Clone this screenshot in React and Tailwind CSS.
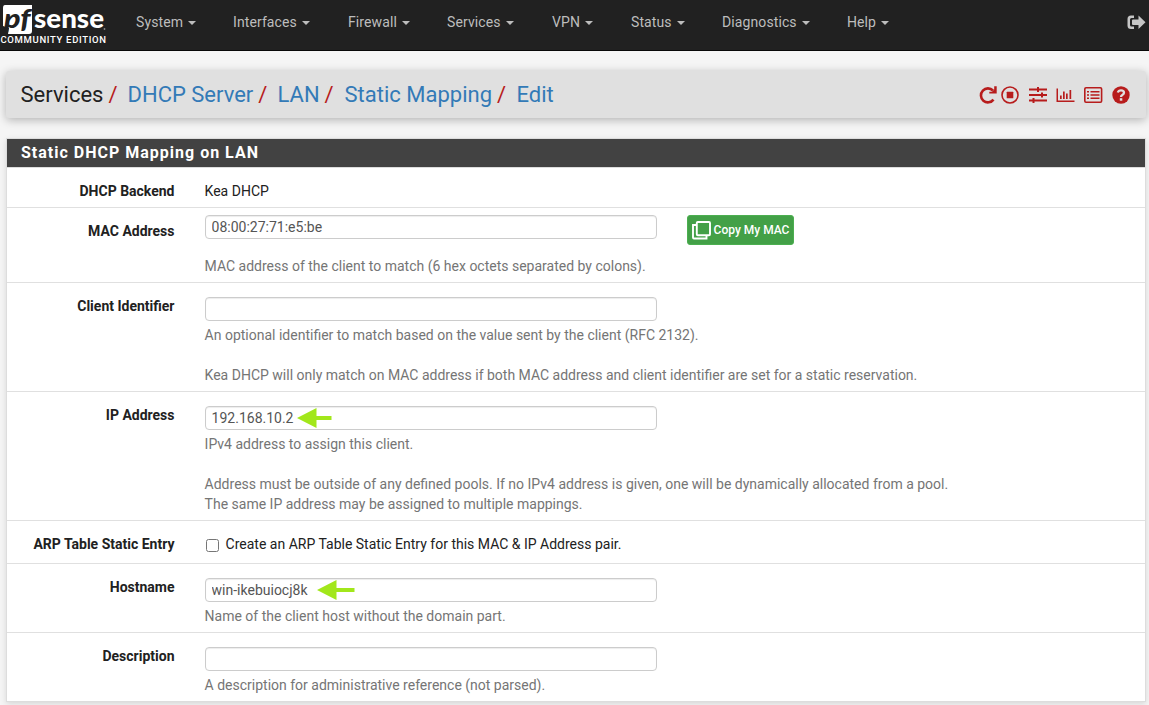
import React from "react";

const navItems = [
  { label: "System", width: "w-[97px]" },
  { label: "Interfaces", width: "w-[115px]" },
  { label: "Firewall", width: "w-[99px]" },
  { label: "Services", width: "w-[105px]" },
  { label: "VPN", width: "w-[79px]" },
  { label: "Status", width: "w-[91px]" },
  { label: "Diagnostics", width: "w-[125px]" },
  { label: "Help", width: "w-[60px]" },
];

function Logo() {
  return (
    <svg className="h-[50px] w-[108px] shrink-0" viewBox="0 0 108 50">
      <path d="M5 5H32V31Q32 34 29 34H8L9 28L3 26V8Q3 5 5 5Z" fill="#fff" />
      <text x="4" y="27.500" fontFamily="Lato, sans-serif" fontSize="27" fontWeight="900" fontStyle="italic" fill="#212121" textLength="26.500" lengthAdjust="spacingAndGlyphs">pf</text>
      <text x="34" y="28" fontFamily="Lato, sans-serif" fontSize="27" fontWeight="900" fill="#fff" textLength="70" lengthAdjust="spacingAndGlyphs">sense</text>
      <circle cx="104.500" cy="29" r="0.900" fill="#888" />
      <text x="0.500" y="43" fontFamily="Roboto, sans-serif" fontSize="9.500" fontWeight="500" fill="#fff" textLength="105.500">COMMUNITY EDITION</text>
    </svg>
  );
}

function NavBar() {
  return (
    <nav className="flex h-[51px] items-start border-b border-[#080808] bg-[#212121]">
      <Logo />
      <ul className="flex pt-3 pl-7 text-sm leading-5 tracking-[0.1px] text-[#bdbdbd]">
        {navItems.map((item) => (
          <li key={item.label} className={"flex items-center " + item.width}>
            {item.label}
            <span className="mt-[2px] ml-[5px] border-x-4 border-t-4 border-x-transparent border-t-[#bdbdbd]" />
          </li>
        ))}
      </ul>
      <svg className="mt-[15px] mr-[3px] ml-auto h-[15px] w-[19px]" viewBox="0 0 19 15" fill="#c6c6c6">
        <path d="M7 0.500V3H4.500Q3 3 3 4.500V10Q3 11.500 4.500 11.500H7V14H4Q0.500 14 0.500 10.500V4Q0.500 0.500 4 0.500Z" />
        <path d="M11.500 0.500L18.500 7.300L11.500 14V10H6Q5 10 5 9V5.500Q5 4.500 6 4.500H11.500Z" />
      </svg>
    </nav>
  );
}

function Breadcrumb() {
  return (
    <header className="mx-[6px] mr-[3px] mt-5 flex h-[47px] items-center rounded-[3px] bg-[#e0e0e0] pr-[16px] pl-[14.500px] shadow-[0_2px_10px_rgba(0,0,0,0.28)]">
      <ol className="flex text-[22px] leading-6 text-[#337ab7]">
        <li className="w-[107px] text-[#212121]">Services<span className="pl-[5px] text-[#b71c1c]">/</span></li>
        <li className="w-[150px]">DHCP Server<span className="pl-[5px] text-[#b71c1c]">/</span></li>
        <li className="w-[67px]">LAN<span className="pl-[5px] text-[#b71c1c]">/</span></li>
        <li className="w-[172px] whitespace-nowrap">Static Mapping<span className="pl-[5px] text-[#b71c1c]">/</span></li>
        <li>Edit</li>
      </ol>
      <div className="ml-auto flex items-center pt-px text-[#b71c1c]">
        <svg className="h-[18px] w-[18px]" viewBox="0 0 18 18" fill="none" stroke="currentColor" strokeWidth="2.600">
          <path d="M14.500 13.600A7 7 0 1 1 14 4.500" />
          <path d="M17.700 0.200V7.500H10.300V5.800H13L15.200 3.500V0.200Z" fill="currentColor" stroke="none" />
        </svg>
        <svg className="ml-[4px] h-[18px] w-[18px]" viewBox="0 0 18 18" fill="none" stroke="currentColor" strokeWidth="1.600">
          <circle cx="9" cy="9" r="8" />
          <rect x="5.700" y="5.700" width="6.600" height="6.600" rx="0.500" fill="currentColor" stroke="none" />
        </svg>
        <svg className="ml-[9px] h-[18px] w-[20px]" viewBox="0 0 20 18" fill="currentColor">
          <path d="M1 2.500H19V4.500H1ZM9 1H11V6H9ZM1 8H19V10H1ZM13 6.500H15V11.500H13ZM1 13.500H19V15.500H1ZM4.500 12H6.500V17H4.500Z" />
        </svg>
        <svg className="ml-[8px] h-[16px] w-[19px]" viewBox="0 0 19 16" fill="currentColor">
          <path d="M0.500 1.500H2V13.500H18.500V15H0.500ZM4 8.500H5.700V12H4ZM7 4.500H8.700V12H7ZM10 6.500H11.700V12H10ZM13.500 3H15.200V12H13.500Z" />
        </svg>
        <svg className="ml-[8px] h-[16px] w-[20px]" viewBox="0 0 20 16" fill="currentColor">
          <rect x="1.800" y="0.800" width="16.800" height="14.400" rx="1.200" fill="none" stroke="currentColor" strokeWidth="1.600" />
          <path d="M4 4H6V5.500H4ZM7.500 4H16.500V5.500H7.500ZM4 7.200H6V8.700H4ZM7.500 7.200H16.500V8.700H7.500ZM4 10.500H6V12H4ZM7.500 10.500H16.500V12H7.500Z" />
        </svg>
        <svg className="ml-[9px] h-[18px] w-[18px]" viewBox="0 0 18 18">
          <circle cx="9" cy="9" r="8.700" fill="currentColor" />
          <path d="M5.800 6.500Q6.500 4.300 9 4.300Q12 4.300 12 6.700Q12 8 10.300 8.900Q9 9.600 9 10.900" fill="none" stroke="#e0e0e0" strokeWidth="2.300" />
          <rect x="7.800" y="12.200" width="2.500" height="2.500" fill="#e0e0e0" />
        </svg>
      </div>
    </header>
  );
}

function Arrow({ left }) {
  return (
    <svg className={"absolute top-[2px] h-[20px] w-[38px] " + left} viewBox="0 0 38 20" fill="#a2e71b">
      <path d="M0 10L19.500 0V8H37.500V12H19.500V20Z" />
    </svg>
  );
}

function ShortArrow({ left }) {
  return (
    <svg className={"absolute top-[2px] h-[20px] w-[35px] " + left} viewBox="0 0 35 20" fill="#a2e71b">
      <path d="M0 10L19.500 0V8H34.500V12H19.500V20Z" />
    </svg>
  );
}

function Field({ value = "", children }) {
  return (
    <div className="relative w-[452px]">
      <input
        type="text"
        defaultValue={value}
        className="block h-6 w-full rounded-[4px] border border-[#ccc] bg-white pr-[6px] pb-px pl-[6px] text-sm text-[#555] shadow-[inset_0_1px_1px_rgba(0,0,0,0.075)] outline-none"
      />
      {children}
    </div>
  );
}

function Row({ label, height, content = "pt-[14px]", last = false, children }) {
  return (
    <div className={"flex " + height + (last ? "" : " border-b border-[#e0e0e0]")}>
      <div className="w-[167.500px] shrink-0 pt-[13px] text-right font-bold text-[#212121]">{label}</div>
      <div className={"ml-[30.100px] grow " + content}>{children}</div>
    </div>
  );
}

function Help({ children, className = "mt-[4px]" }) {
  return <p className={"text-[#757575] " + className}>{children}</p>;
}

export default function App() {
  return (
    <div className="h-[705px] overflow-hidden bg-[#f5f5f5] font-['Roboto',sans-serif] text-sm leading-5 text-[#212121]">
      <NavBar />
      <Breadcrumb />
      <main className="mt-5 mr-[3px] ml-[6px] border border-[#ddd] bg-white shadow-[0_2px_6px_rgba(0,0,0,0.12)]">
        <h2 className="h-[29px] border-b border-[#ddd] bg-[#424242] pl-[14px] text-base leading-[28px] font-bold tracking-[1px] text-white">
          Static DHCP Mapping on LAN
        </h2>
        <Row label="DHCP Backend" height="h-[40px]" content="pt-[13px]">Kea DHCP</Row>
        <Row label="MAC Address" height="h-[75px]" content="pt-[7px]">
          <div className="flex h-[41px] items-start">
            <Field value="08:00:27:71:e5:be" />
            <button className="ml-[30px] flex h-[30px] w-[107px] items-center rounded-[3px] border border-[#4caf50] bg-[#43a047] pl-1 text-xs font-medium whitespace-nowrap text-white">
              <svg className="mr-[3px] h-[20px] w-[19px] shrink-0" viewBox="0 0 19 20" fill="none" stroke="currentColor" strokeWidth="1.900">
                <rect x="4.800" y="2" width="13.200" height="13.200" rx="1" />
                <path d="M4.500 5H1V17.500Q1 18.500 2 18.500H14.500V15.500" />
              </svg>
              Copy My MAC
            </button>
          </div>
          <Help className="">MAC address of the client to match (6 hex octets separated by colons).</Help>
        </Row>
        <Row label="Client Identifier" height="h-[109px]">
          <Field />
          <Help>An optional identifier to match based on the value sent by the client (RFC 2132).<br /><br />Kea DHCP will only match on MAC address if both MAC address and client identifier are set for a static reservation.</Help>
        </Row>
        <Row label="IP Address" height="h-[129px]">
          <Field value="192.168.10.2"><ShortArrow left="left-[92.400px]" /></Field>
          <Help>IPv4 address to assign this client.<br /><br />Address must be outside of any defined pools. If no IPv4 address is given, one will be dynamically allocated from a pool.<br />The same IP address may be assigned to multiple mappings.</Help>
        </Row>
        <Row label="ARP Table Static Entry" height="h-[43px]" content="pt-[13px]">
          <label className="flex items-center">
            <input type="checkbox" className="mt-[2px] mr-[7px] ml-px h-[13px] w-[13px]" />
            Create an ARP Table Static Entry for this MAC &amp; IP Address pair.
          </label>
        </Row>
        <Row label="Hostname" height="h-[69px]">
          <Field value="win-ikebuiocj8k"><Arrow left="left-[112.400px]" /></Field>
          <Help>Name of the client host without the domain part.</Help>
        </Row>
        <Row label="Description" height="h-[68px]" last>
          <Field />
          <Help>A description for administrative reference (not parsed).</Help>
        </Row>
      </main>
    </div>
  );
}
